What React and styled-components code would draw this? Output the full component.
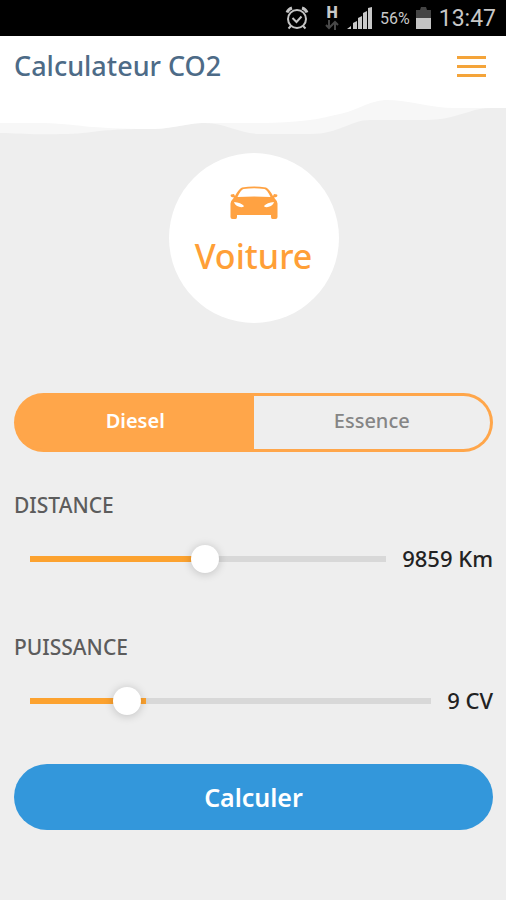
import React, { useState } from 'react';
import styled, { createGlobalStyle } from 'styled-components';

const GlobalStyle = createGlobalStyle`
  * {
    box-sizing: border-box;
  }
  body {
    margin: 0;
    background-color: #eee;
    font-family: "Noto Sans", "Open Sans", sans-serif;
  }
`;

const fuels = ['Diesel', 'Essence'];

const AlarmIcon = () => (
  <svg width="24" height="24" viewBox="0 0 24 24" fill="none" stroke="#c4c4c4" strokeWidth="2">
    <circle cx="12" cy="13" r="9" />
    <path d="M7.500 12l4 4 5-5.500" />
    <path d="M2 6.500Q3.500 3 7 2M22 6.500Q20.500 3 17 2" strokeWidth="3" />
    <path d="M6 20l-2.500 2.500M18 20l2.500 2.500" />
  </svg>
);

const ArrowsIcon = () => (
  <svg width="14" height="10" viewBox="0 0 14 10" fill="none" stroke="#484848" strokeWidth="2">
    <path d="M4 0v8M1 5l3 3 3-3M10 10V2M7 5l3-3 3 3" />
  </svg>
);

const SignalIcon = () => (
  <svg width="25" height="22" viewBox="0 0 25 22" fill="#c8c8c8">
    <path d="M0 22l4-3v3zM6 16l4-2v8H6zM11 11l4-2v13h-4zM16 6l4-2v18h-4zM21 1l4-1v22h-4z" />
  </svg>
);

const BatteryIcon = () => (
  <svg width="15" height="22" viewBox="0 0 15 22">
    <path d="M0 3h4l1-3h5l1 3h4v8H0z" fill="#444" />
    <path d="M0 11h15v11H0z" fill="#c4c4c4" />
  </svg>
);

const CarIcon = () => (
  <svg width="48" height="34" viewBox="0 0 48 34">
    <path
      fill="#ffa242"
      fillRule="evenodd"
      d="M12 1.500Q24-.5 36 1.500 39 2.500 43 10l1-2 3 .5q1 1.500-.5 2.500l-2.500.5q3 3 3.500 6V31q0 2-2 2h-3q-1.500 0-1.500-2v-2H7v2q0 2-1.500 2h-3q-2 0-2-2V17.500q.5-3 3.500-6L1.500 11Q0 10 1 8.500L4 8l1 2Q9 2.500 12 1.500zM13.500 3Q11 3.500 7.500 11 24 10 40.500 11 37 3.500 34.500 3 24 1.500 13.500 3zM4 16q1 4 6 5 4 .5 4-1Q11 16.500 4 16zM44 16q-7 .5-10 4 0 1.500 4 1 5-1 6-5z"
    />
  </svg>
);

const SliderField = ({ id, label, unit, min, max, defaultValue }) => {
  const [value, setValue] = useState(defaultValue);
  const fill = (value / (max + 1)) * 100;

  return (
    <Field>
      <FieldLabel htmlFor={id}>{label}</FieldLabel>
      <SliderRow>
        <Slider
          id={id}
          type="range"
          min={min}
          max={max}
          value={value}
          onChange={(e) => setValue(Number(e.target.value))}
          style={{ '--fill': `${fill}%` }}
        />
        <SliderValue htmlFor={id}>{value} {unit}</SliderValue>
      </SliderRow>
    </Field>
  );
};

const App = () => {
  const [fuel, setFuel] = useState('Diesel');

  return (
    <div>
      <GlobalStyle />
      <StatusBar>
        <AlarmIcon />
        <Network>
          <NetworkType>H</NetworkType>
          <ArrowsIcon />
        </Network>
        <SignalIcon />
        <BatteryLevel>56%</BatteryLevel>
        <BatteryIcon />
        <Clock>13:47</Clock>
      </StatusBar>

      <Header>
        <Title>Calculateur CO2</Title>
        <MenuButton aria-label="Menu">
          <MenuLine />
          <MenuLine />
          <MenuLine />
        </MenuButton>
      </Header>
      <Waves viewBox="0 0 506 38" preserveAspectRatio="none">
        <path fill="#f7f7f7" d="M0 0H506V10Q488 9 475 12C455 18 445 22 425 22H370C350 22 340 36 310 36H260C240 36 225 25 205 25 185 25 175 31 150 31 90 31 95 36 60 36 25 37 20 35 0 35z" />
        <path fill="#fff" d="M0 0H506V10H455C430 10 410 2 385 2 365 4 355 14 335 17 310 24 280 25 253 25H205C185 25 175 31 150 31 90 31 75 26 45 25H0z" />
      </Waves>

      <Content>
        <VehicleButton>
          <CarIcon />
          <VehicleName>Voiture</VehicleName>
        </VehicleButton>

        <FuelSwitch role="radiogroup" aria-label="Carburant">
          {fuels.map((item) => (
            <FuelOption key={item} $active={item === fuel}>
              <FuelRadio
                type="radio"
                name="fuel"
                value={item}
                checked={item === fuel}
                onChange={() => setFuel(item)}
              />
              {item}
            </FuelOption>
          ))}
        </FuelSwitch>

        <SliderField id="distance" label="DISTANCE" unit="Km" min={100} max={20000} defaultValue={9859} />
        <SliderField id="puissance" label="PUISSANCE" unit="CV" min={3} max={30} defaultValue={9} />

        <SubmitButton type="button">Calculer</SubmitButton>
      </Content>
    </div>
  );
};

const StatusBar = styled.div`
  display: flex;
  align-items: center;
  justify-content: flex-end;
  height: 36px;
  padding: 0 10px;
  background-color: #000;
  color: #c8c8c8;
  font-family: Roboto, sans-serif;
`;

const Network = styled.div`
  display: flex;
  flex-direction: column;
  align-items: center;
  margin: 0 8px 0 16px;
`;

const NetworkType = styled.span`
  font-size: 16px;
  line-height: 14px;
  font-weight: 900;
`;

const BatteryLevel = styled.span`
  margin: 0 6px 0 8px;
  font-size: 16px;
`;

const Clock = styled.span`
  margin-left: 8px;
  font-size: 23px;
`;

const Header = styled.header`
  display: flex;
  align-items: center;
  justify-content: space-between;
  height: 62px;
  padding: 0 20px 2px 14px;
  background-color: #fff;
`;

const Title = styled.h1`
  margin: 0;
  font-size: 27px;
  line-height: 36px;
  font-weight: 500;
  color: #4d6b87;
`;

const MenuButton = styled.button`
  display: flex;
  flex-direction: column;
  gap: 6px;
  padding: 0;
  border: none;
  background: none;
  cursor: pointer;
`;

const MenuLine = styled.span`
  width: 29px;
  height: 3px;
  background-color: #f4a43a;
`;

const Waves = styled.svg`
  display: block;
  width: 100%;
  height: 38px;
`;

const Content = styled.main`
  display: flex;
  flex-direction: column;
  padding: 17px 13px 70px 14px;
`;

const VehicleButton = styled.button`
  display: flex;
  flex-direction: column;
  align-items: center;
  align-self: center;
  width: 170px;
  height: 170px;
  padding: 33px 0 0;
  border: none;
  border-radius: 50%;
  background-color: #fff;
  font-family: inherit;
  cursor: pointer;
`;

const VehicleName = styled.span`
  margin-top: 12px;
  font-size: 34px;
  line-height: 48px;
  font-weight: 500;
  color: #ff9f37;
`;

const FuelSwitch = styled.div`
  display: flex;
  height: 59px;
  margin-top: 70px;
  padding: 3px;
  border-radius: 30px;
  background-color: #ffa64a;
`;

const FuelOption = styled.label`
  flex: 1;
  display: flex;
  align-items: center;
  justify-content: center;
  padding-bottom: 4px;
  background-color: ${({ $active }) => ($active ? '#ffa64a' : '#eee')};
  color: ${({ $active }) => ($active ? '#fff' : '#858585')};
  font-size: 20px;
  font-weight: ${({ $active }) => ($active ? 600 : 500)};
  cursor: pointer;

  &:first-child {
    border-radius: 27px 0 0 27px;
  }

  &:last-child {
    border-radius: 0 27px 27px 0;
  }
`;

const FuelRadio = styled.input`
  appearance: none;
  width: 0;
  height: 0;
  margin: 0;
`;

const Field = styled.div`
  margin-top: 38px;
  margin-bottom: 20px;
`;

const FieldLabel = styled.label`
  display: block;
  font-size: 21px;
  line-height: 30px;
  font-weight: 500;
  color: #5c5c5c;
`;

const SliderRow = styled.div`
  display: flex;
  align-items: center;
  gap: 16px;
  margin-top: 24px;
  padding-left: 16px;
`;

const Slider = styled.input`
  appearance: none;
  flex: 1;
  min-width: 0;
  height: 28px;
  margin: 0;
  background: none;
  cursor: pointer;

  &::-webkit-slider-runnable-track {
    height: 6px;
    background: linear-gradient(to right, #fca22f var(--fill), #d8d8d8 var(--fill));
  }

  &::-webkit-slider-thumb {
    appearance: none;
    width: 28px;
    height: 28px;
    margin-top: -11px;
    border-radius: 50%;
    background-color: #fff;
    box-shadow: 0 1px 10px rgba(0, 0, 0, 0.2);
  }
`;

const SliderValue = styled.output`
  padding-bottom: 2px;
  font-size: 22px;
  line-height: 28px;
  font-weight: 500;
  color: #222;
`;

const SubmitButton = styled.button`
  height: 66px;
  margin-top: 28px;
  border: none;
  border-radius: 33px;
  background-color: #3397db;
  color: #fff;
  font-family: inherit;
  font-size: 25px;
  font-weight: 600;
  cursor: pointer;
`;

export default App;
